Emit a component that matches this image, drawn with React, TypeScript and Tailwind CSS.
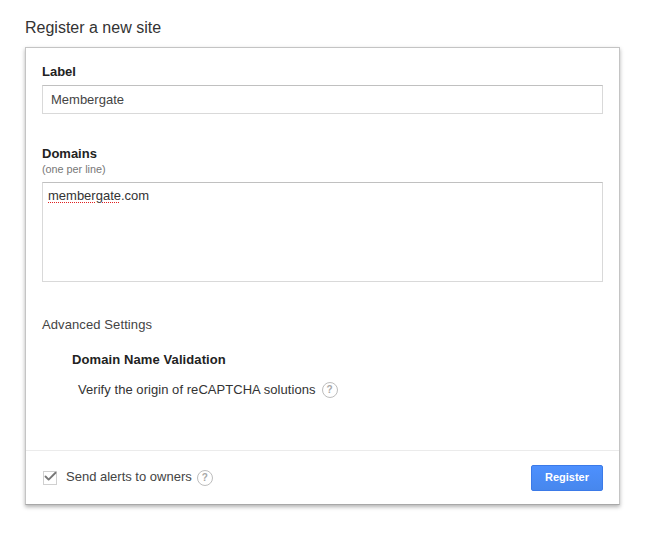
import { Check } from "lucide-react";

function HelpIcon({ className }: { className: string }) {
  return (
    <span
      className={`flex h-4 w-4 items-center justify-center rounded-full border border-[#bdbdbd] text-[10px] font-bold leading-none text-[#a8a8a8] ${className}`}
    >
      ?
    </span>
  );
}

export default function App() {
  return (
    <div className="min-h-[538px] bg-white pl-[25px] pt-[18px] font-['Liberation_Sans',Arial,sans-serif] text-[13px] text-[#333]">
      <h1 className="h-[29px] text-[16px] font-normal leading-[19px] text-[#333]">
        Register a new site
      </h1>
      <div className="w-[595px] border border-[#c4c4c4] border-b-[#a8a8a8] shadow-[0_2px_4px_rgba(0,0,0,0.3)]">
        <div className="h-[402px] pl-4 pr-4 pt-4">
          <label className="block h-[21px] font-bold leading-[15px] text-[#222]">Label</label>
          <div className="flex h-[29px] w-[561px] items-center border border-[#d9d9d9] border-t-[#c0c0c0] pl-2 text-[#444]">
            Membergate
          </div>
          <div className="mt-[32px] font-bold leading-[15px] text-[#222]">Domains</div>
          <div className="mt-[2px] h-[18px] text-[10.8px] leading-[13px] text-[#777]">(one per line)</div>
          <div className="mt-[1px] h-[100px] w-[561px] border border-[#d9d9d9] border-t-[#c0c0c0] pl-[5px] pt-[4px] leading-[17px] text-[#333]">
            <span className="underline decoration-[#e02020] decoration-dotted decoration-1 underline-offset-[2px]">
              membergate
            </span>
            .com
          </div>
          <div className="mt-[35px] leading-[15px] tracking-[0.1px] text-[#444]">Advanced Settings</div>
          <div className="mt-[20px] pl-[30px] font-bold leading-[15px] tracking-[0.1px] text-[#222]">
            Domain Name Validation
          </div>
          <div className="mt-[13px] flex items-center pl-[36px] tracking-[0.05px] text-[#333]">
            Verify the origin of reCAPTCHA solutions
            <HelpIcon className="ml-[6px]" />
          </div>
        </div>
        <div className="flex h-[54px] items-center justify-between border-t border-[#ebebeb] pl-[17px] pr-4">
          <div className="flex items-center">
            <span className="relative flex h-[14px] w-[14px] items-center justify-center border border-[#d0d0d0]">
              <Check className="absolute -top-[3px] -right-[2px] h-[15px] w-[15px] text-[#777]" strokeWidth={3} />
            </span>
            <span className="mb-[2px] ml-[9px] text-[#444]">Send alerts to owners</span>
            <HelpIcon className="ml-[5px]" />
          </div>
          <button
            type="button"
            className="h-[26px] w-[72px] rounded-[2px] border border-[#3b7ae8] bg-gradient-to-b from-[#4d90fe] to-[#4787ed] text-[11px] font-bold text-white"
          >
            Register
          </button>
        </div>
      </div>
    </div>
  );
}
